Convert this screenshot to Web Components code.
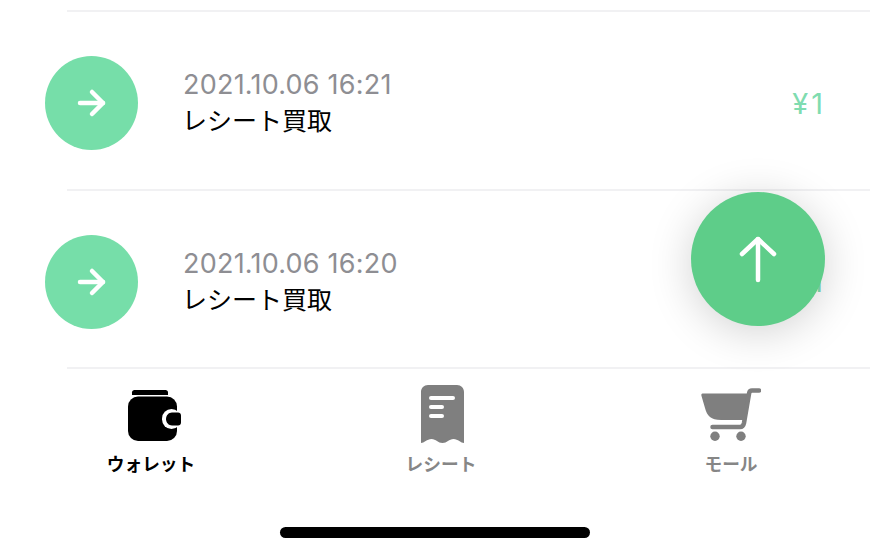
<!DOCTYPE html>
<html lang="ja">
<head>
<meta charset="utf-8">
<title>Wallet</title>
<style>
  html, body { margin: 0; height: 100%; background: #fff; overflow: hidden; }
  body { font-family: Inter, "Noto Sans CJK JP", sans-serif; }
</style>
</head>
<body>
<wallet-screen>
  <history-row slot="rows" date="2021.10.06 16:21" title="レシート買取" amount="¥1"></history-row>
  <history-row slot="rows" date="2021.10.06 16:20" title="レシート買取" amount="¥1"></history-row>
  <tab-item slot="tabs" label="ウォレット" active>
    <svg width="53" height="51" viewBox="0 0 53 51" style="transform:translateX(3px);margin-bottom:2px">
      <path fill="#000" d="M4 5V2.500C4 1 5 0 6.500 0h31C39 0 40 1 40 2.500V5z"/>
      <rect x="0" y="6.500" width="49" height="44.500" rx="10" fill="#000"/>
      <rect x="34" y="19" width="19" height="20" rx="9.500" fill="#fff"/>
      <path fill="#000" d="M44 22.500h6c1.700 0 3 1.300 3 3v7c0 1.700-1.300 3-3 3h-6c-3.300 0-6-2.900-6-6.500s2.700-6.500 6-6.500z"/>
    </svg>
  </tab-item>
  <tab-item slot="tabs" label="レシート">
    <svg width="43" height="58" viewBox="0 0 43 58" style="transform:translateX(1px)">
      <path fill="#7f7f7f" d="M7 0h29c4 0 7 3 7 7v51c-3 0-6-4-10.500-4S26 58 21.500 58 15 54 10.500 54 3 58 0 58V7c0-4 3-7 7-7z"/>
      <g fill="none" stroke="#fff" stroke-width="4" stroke-linecap="round">
        <path d="M10 13h22"/><path d="M10 22h11"/><path d="M10 31h11"/>
      </g>
    </svg>
  </tab-item>
  <tab-item slot="tabs" label="モール">
    <svg width="60" height="53" viewBox="0 0 60 53" style="margin-bottom:2px">
      <path fill="#7f7f7f" d="M1.500 5.500H47L42.500 32H20C10 32 6 28 4 20L.5 8c-.4-1.400 0-2.500 1-2.500z"/>
      <path fill="none" stroke="#7f7f7f" stroke-width="4.500" stroke-linecap="round" stroke-linejoin="round" d="M58 2.500h-7c-1.500 0-2.500.8-2.800 2.300L43 35c-.5 2.500-2 4-4 4H11.500"/>
      <circle cx="14" cy="48.300" r="4.700" fill="#7f7f7f"/>
      <circle cx="40" cy="48.300" r="4.700" fill="#7f7f7f"/>
    </svg>
  </tab-item>
</wallet-screen>

<script>
class WalletScreen extends HTMLElement {
  constructor() {
    super();
    this._root = this.attachShadow({mode: 'open'});
    this._root.innerHTML = `
      <style>
        :host { display: block; position: relative; width: 870px; height: 556px; overflow: hidden; background: #fff; }
        .list { padding-top: 10px; }
        .line { height: 2px; margin-left: 67px; background: #f1f1f3; }
        .tabs { display: grid; grid-template-columns: repeat(3, 290px); padding: 14px 0 0 6px; height: 158px; box-sizing: border-box; }
        .home { width: 310px; height: 11px; margin: 0 auto; border-radius: 6px; background: #000; }
        .fab { position: absolute; left: 691px; top: 192px; width: 134px; height: 134px; border-radius: 50%;
          background: #5ecd89; box-shadow: 0 6px 44px rgba(0,0,0,.18); display: flex; align-items: center; justify-content: center; }
      </style>
      <div class="list">
        <div class="line"></div>
        <slot name="rows"></slot>
      </div>
      <div class="tabs"><slot name="tabs"></slot></div>
      <div class="home"></div>
      <div class="fab">
        <svg width="38" height="48" viewBox="0 0 38 48" fill="none" stroke="#fff" stroke-width="4.500" stroke-linecap="round" stroke-linejoin="round">
          <path d="M19 45V4"/><path d="M3 19L19 4l16 15"/>
        </svg>
      </div>`;
  }
}

class HistoryRow extends HTMLElement {
  constructor() {
    super();
    this._root = this.attachShadow({mode: 'open'});
  }

  connectedCallback() {
    this._root.innerHTML = `
      <style>
        :host { display: block; }
        .row { display: flex; align-items: center; height: 176.500px; padding: 6px 44px 0 45px; box-sizing: border-box; }
        .dot { flex: none; width: 93px; height: 94px; border-radius: 50%; background: #76dea9;
          display: flex; align-items: center; justify-content: center; margin-right: 45px; }
        .text { flex: 1; }
        .date { font-size: 27px; line-height: 36px; color: #8e8e93; letter-spacing: .22px; }
        .title { font-size: 25px; line-height: 36px; color: #000; margin-left: -1px; }
        .amount { font-size: 29px; color: #7fdcb0; letter-spacing: 3px; }
        .line { height: 2px; margin-left: 67px; background: #f1f1f3; }
      </style>
      <div class="row">
        <div class="dot">
          <svg width="30" height="30" viewBox="0 0 30 30" fill="none" stroke="#fff" stroke-width="4.500" stroke-linecap="round" stroke-linejoin="round">
            <path d="M3 15h23"/><path d="M15 4l11 11-11 11"/>
          </svg>
        </div>
        <div class="text">
          <div class="date"></div>
          <div class="title"></div>
        </div>
        <div class="amount"></div>
      </div>
      <div class="line"></div>`;
    this._root.querySelector('.date').textContent = this.getAttribute('date');
    this._root.querySelector('.title').textContent = this.getAttribute('title');
    this._root.querySelector('.amount').textContent = this.getAttribute('amount');
  }
}

class TabItem extends HTMLElement {
  constructor() {
    super();
    this._root = this.attachShadow({mode: 'open'});
  }

  connectedCallback() {
    const active = this.hasAttribute('active');
    this._root.innerHTML = `
      <style>
        :host { display: flex; flex-direction: column; align-items: center; }
        .icon { height: 60px; display: flex; align-items: flex-end; justify-content: center; }
        .label { font-size: 17.700px; line-height: 24px; margin-top: 10px; font-weight: 700; color: ${active ? '#000' : '#868686'}; }
      </style>
      <div class="icon"><slot></slot></div>
      <div class="label"></div>`;
    this._root.querySelector('.label').textContent = this.getAttribute('label');
  }
}

window.customElements.define("wallet-screen", WalletScreen);
window.customElements.define("history-row", HistoryRow);
window.customElements.define("tab-item", TabItem);
</script>
</body>
</html>
